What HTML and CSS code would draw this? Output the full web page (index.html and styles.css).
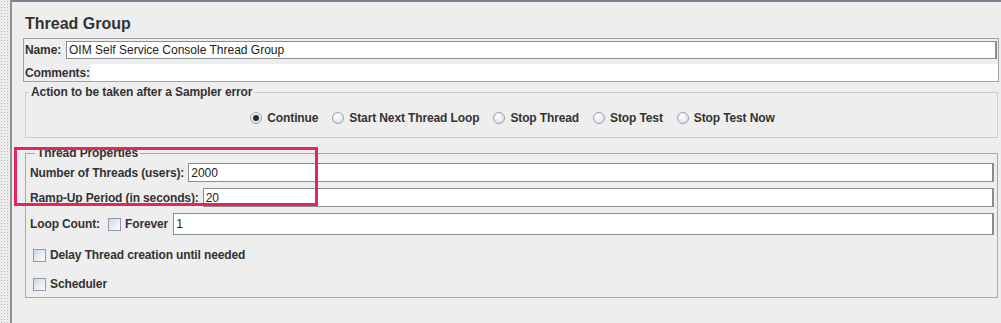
FILE: index.html
```html
<!DOCTYPE html>
<html lang="en">
<head>
  <meta charset="UTF-8">
  <title>Thread Group</title>
  <link rel="stylesheet" href="styles.css">
</head>
<body>
  <div class="frame">
    <div class="splitter"></div>
    <div class="content">
      <h1 class="title">Thread Group</h1>

      <div class="namebox">
        <div class="row name-row">
          <span class="label name-label">Name:</span>
          <div class="field">OIM Self Service Console Thread Group</div>
        </div>
        <div class="row comments-row">
          <span class="label comments-label">Comments:</span>
          <div class="field flat"></div>
        </div>
      </div>

      <fieldset class="group action">
        <legend>Action to be taken after a Sampler error</legend>
        <div class="radios">
          <span class="radio-item"><span class="radio checked"></span>Continue</span>
          <span class="radio-item"><span class="radio"></span>Start Next Thread Loop</span>
          <span class="radio-item"><span class="radio"></span>Stop Thread</span>
          <span class="radio-item"><span class="radio"></span>Stop Test</span>
          <span class="radio-item"><span class="radio"></span>Stop Test Now</span>
        </div>
      </fieldset>

      <fieldset class="group props">
        <legend>Thread Properties</legend>
        <div class="prop-row">
          <span class="label">Number of Threads (users):</span>
          <div class="field">2000</div>
        </div>
        <div class="prop-row">
          <span class="label">Ramp-Up Period (in seconds):</span>
          <div class="field">20</div>
        </div>
        <div class="prop-row loop-row">
          <span class="label">Loop Count:</span>
          <span class="check-item forever"><span class="checkbox"></span>Forever</span>
          <div class="field">1</div>
        </div>
        <div class="check-row">
          <span class="checkbox"></span><span class="label">Delay Thread creation until needed</span>
        </div>
        <div class="check-row">
          <span class="checkbox"></span><span class="label">Scheduler</span>
        </div>
      </fieldset>
    </div>
  </div>
  <!-- annotation box drawn over the form -->
  <div class="highlight"></div>
</body>
</html>
```

FILE: styles.css
```css
body {
  margin: 0;
  background: #eeeeee;
  font-family: "Liberation Sans", Arial, sans-serif;
  font-size: 12px;
  color: #333333;
  height: 323px;
  overflow: hidden;
}
.frame {
  display: flex;
  height: 323px;
}
.splitter {
  width: 10px;
  flex: none;
  background-color: #ececec;
  background-image: radial-gradient(circle, #b9b9b9 0.7px, transparent 0.9px);
  background-size: 3px 3px;
  border-right: 2px solid #8f8f8f;
}
.content {
  flex: 1;
  border-top: 2px solid #7b8591;
  padding: 0 2px 0 11px;
}
.title {
  margin: 0 0 5px 2px;
  padding-top: 12px;
  font-size: 16px;
  line-height: 19px;
  font-weight: bold;
  color: #333333;
}
.label {
  font-weight: bold;
  white-space: nowrap;
  letter-spacing: -0.12px;
}
.field {
  flex: 1;
  box-sizing: border-box;
  background: #ffffff;
  border: 1px solid #8a8d90;
  border-right-width: 2px;
  padding: 0 2px;
  font-size: 12px;
  display: flex;
  align-items: center;
  color: #222222;
}

/* name / comments */
.namebox {
  border: 1px solid #a3a3a3;
  padding: 2px 0 0 1px;
}
.row {
  display: flex;
  align-items: center;
}
.name-row {
  height: 18px;
  padding-right: 1px;
}
.name-row .field {
  height: 18px;
}
.comments-row {
  height: 17px;
  margin-top: 5px;
}
.comments-row .field {
  height: 17px;
}
.name-label {
  width: 41px;
}
.comments-label {
  width: 66px;
}
.field.flat {
  border: none;
}

/* titled groups */
.group {
  margin: 3px 1px 0 2px;
  padding: 0;
  min-width: 0;
}
.group legend {
  font-weight: bold;
  line-height: 14px;
  padding: 0 2px;
  letter-spacing: -0.1px;
}
.action {
  border: 1px solid #c7ced6;
  padding: 11px 0 11px 0;
}
.action legend {
  margin-left: 3px;
}
.radios {
  display: flex;
  justify-content: center;
  gap: 14px;
  height: 16px;
  align-items: center;
  padding-left: 2px;
  letter-spacing: -0.12px;
}
.radio-item {
  display: flex;
  align-items: center;
  gap: 5px;
  font-weight: bold;
}
.radio {
  width: 12px;
  height: 12px;
  box-sizing: border-box;
  border-radius: 50%;
  border: 1px solid #9aa4ae;
  background: radial-gradient(circle at 40% 35%, #ffffff 0%, #e9edf1 50%, #cfd6de 100%);
  display: flex;
  align-items: center;
  justify-content: center;
}
.radio.checked::after {
  content: "";
  width: 6px;
  height: 6px;
  border-radius: 50%;
  background: #2b2b2b;
}

.props {
  border: 1px solid #a8a8a8;
  margin-top: 8px;
  padding: 3px 3px 5px 4px;
}
.props legend {
  margin-left: 5px;
}
.prop-row {
  display: flex;
  align-items: center;
  gap: 4px;
  height: 19px;
  margin-bottom: 6px;
}
.prop-row .field {
  height: 19px;
}
.loop-row {
  height: 22px;
  margin-bottom: 12px;
  gap: 0;
}
.loop-row .field {
  height: 22px;
}
.check-item {
  display: flex;
  align-items: center;
  gap: 4px;
  font-weight: bold;
  letter-spacing: -0.12px;
}
.forever {
  margin-left: 8px;
  margin-right: 5px;
}
.checkbox {
  width: 13px;
  height: 13px;
  flex: none;
  box-sizing: border-box;
  border: 1px solid #8e9cab;
  background: linear-gradient(135deg, #cdd7e2 0%, #e8eef4 55%, #fbfcfd 100%);
}
.check-row {
  display: flex;
  align-items: center;
  gap: 4px;
  height: 16px;
  padding-left: 3px;
  margin-bottom: 13px;
}
.check-row:last-child {
  margin-bottom: 0;
}

.highlight {
  position: absolute;
  left: 14px;
  top: 147px;
  width: 304px;
  height: 59px;
  box-sizing: border-box;
  border: 3px solid #e2275f;
}
```
